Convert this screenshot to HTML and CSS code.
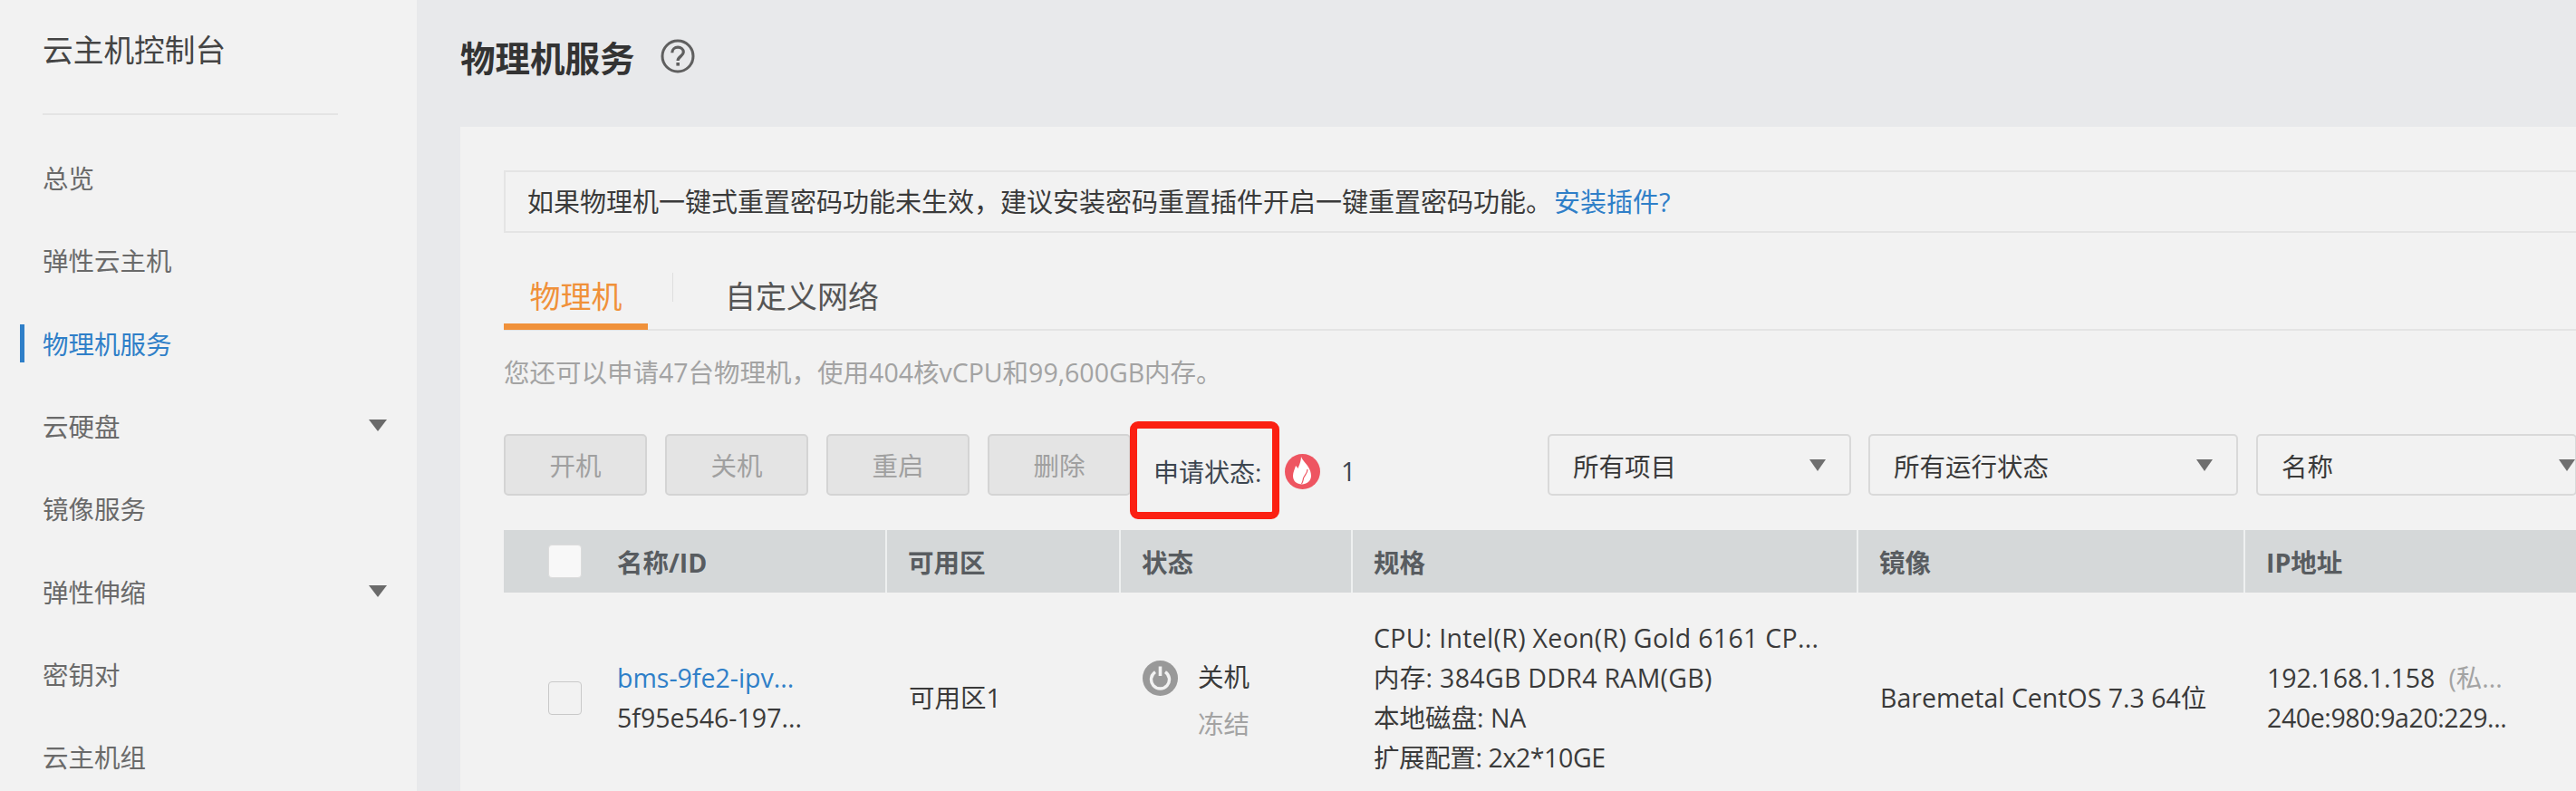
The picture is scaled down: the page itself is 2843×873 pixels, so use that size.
FILE: index.html
```html
<!DOCTYPE html>
<html lang="zh-CN">
<head>
  <meta charset="UTF-8" />
  <title>物理机服务</title>
  <link rel="stylesheet" href="styles.css">
</head>
<body>
  <div class="console">
    <!-- Left navigation -->
    <aside class="sidebar">
      <div class="sidebar-title">云主机控制台</div>
      <ul class="nav">
        <li class="nav-item">总览</li>
        <li class="nav-item">弹性云主机</li>
        <li class="nav-item active">物理机服务</li>
        <li class="nav-item has-sub">云硬盘<span class="arrow"></span></li>
        <li class="nav-item">镜像服务</li>
        <li class="nav-item has-sub">弹性伸缩<span class="arrow"></span></li>
        <li class="nav-item">密钥对</li>
        <li class="nav-item">云主机组</li>
      </ul>
    </aside>

    <main class="main">
      <header class="page-header">
        <h1>物理机服务</h1>
        <svg class="help-icon" viewBox="0 0 38 38">
          <circle cx="19" cy="19" r="17" fill="none" stroke="#5f5f5f" stroke-width="3"/>
          <path d="M12.800 15.200c0-3.700 2.800-6 6.300-6s6.200 2.200 6.200 5.300c0 4.600-6.200 4.700-6.200 9.600" fill="none" stroke="#5f5f5f" stroke-width="3.200"/>
          <rect x="17.400" y="26" width="3.600" height="3.600" fill="#5f5f5f"/>
        </svg>
      </header>

      <section class="panel">
        <div class="notice">如果物理机一键式重置密码功能未生效，建议安装密码重置插件开启一键重置密码功能。<a class="link notice-link">安装插件?</a></div>

        <div class="tabs">
          <div class="tab active">物理机</div>
          <div class="tab-sep"></div>
          <div class="tab">自定义网络</div>
        </div>

        <p class="quota">您还可以申请47台物理机，使用404核vCPU和99,600GB内存。</p>

        <div class="toolbar">
          <button class="btn">开机</button>
          <button class="btn">关机</button>
          <button class="btn">重启</button>
          <button class="btn">删除</button>
          <div class="apply-status">
            <span class="apply-label">申请状态:</span>
            <span class="red-box"></span>
            <svg class="flame-icon" viewBox="0 0 39 39">
              <circle cx="19.500" cy="19.500" r="19.500" fill="#ee5561"/>
              <path d="M18 3c2 6 11 11 11 21 0 6-5 9.500-10 9.500-6 0-10-3.500-10-9.500 0-4 2-7 3-11 1 1 2 2 2.500 3C16 12 18 8 18 3z" fill="#fff"/>
              <path d="M25 17c0 5-4 7-4.500 10-.5 2-.5 4-2 6" fill="none" stroke="#ee5561" stroke-width="1.200"/>
            </svg>
            <span class="apply-count">1</span>
          </div>
          <div class="select select-project">所有项目<span class="arrow"></span></div>
          <div class="select select-state">所有运行状态<span class="arrow"></span></div>
          <div class="select select-name">名称<span class="arrow"></span></div>
        </div>

        <div class="table">
          <div class="table-head">
            <div class="cell name-cell"><span class="checkbox"></span>名称/ID</div>
            <div class="cell">可用区</div>
            <div class="cell">状态</div>
            <div class="cell">规格</div>
            <div class="cell">镜像</div>
            <div class="cell">IP地址</div>
          </div>
          <div class="table-row">
            <div class="cell name-cell">
              <span class="checkbox"></span>
              <div>
                <div><a class="link">bms-9fe2-ipv...</a></div>
                <div>5f95e546-197...</div>
              </div>
            </div>
            <div class="cell">可用区1</div>
            <div class="cell state-cell">
              <svg class="power-icon" viewBox="0 0 39 39">
                <circle cx="19.500" cy="19.500" r="19.500" fill="#999"/>
                <path d="M14 12.600a10 10 0 1 0 11 0" fill="none" stroke="#f2f2f2" stroke-width="3.400"/>
                <path d="M19.500 6.500V17" fill="none" stroke="#f2f2f2" stroke-width="3.600"/>
              </svg>
              <div class="state-text">
                <div>关机</div>
                <div class="muted">冻结</div>
              </div>
            </div>
            <div class="cell spec-cell">
              <div class="spec-wide">CPU: Intel(R) Xeon(R) Gold 6161 CP...</div>
              <div class="spec-wide">内存: 384GB DDR4 RAM(GB)</div>
              <div>本地磁盘: NA</div>
              <div class="spec-tight">扩展配置: 2x2*10GE</div>
            </div>
            <div class="cell">Baremetal CentOS 7.3 64位</div>
            <div class="cell">
              <div>
                <div>192.168.1.158<span class="muted ip-note">(私...</span></div>
                <div class="ip-v6">240e:980:9a20:229...</div>
              </div>
            </div>
          </div>
        </div>
      </section>
    </main>
  </div>
</body>
</html>
```

FILE: styles.css
```css
/* GLOBAL */
:root {
  --panel-bg: #f2f2f2;
  --main-bg: #e8e9eb;
  --text-color: #3a3a3a;
  --muted: #a3a3a3;
  --blue: #2f7fc8;
  --orange: #f0913a;
  --line: #e4e4e4;
}

* {
  box-sizing: border-box;
}

html, body {
  margin: 0;
  padding: 0;
  height: 873px;
  overflow: hidden;
  background: var(--main-bg);
  font-family: "Open Sans", "Noto Sans CJK SC", sans-serif;
  font-size: 28.5px;
  color: var(--text-color);
}

.console {
  display: flex;
  height: 873px;
}

.arrow {
  width: 0;
  height: 0;
  border-left: 9px solid transparent;
  border-right: 9px solid transparent;
  border-top: 13px solid #6f6f6f;
}

.link {
  color: var(--blue);
}

.muted {
  color: var(--muted);
}

/* SIDEBAR */
.sidebar {
  flex: 0 0 460px;
  background: var(--panel-bg);
  padding: 0 33px 0 0;
}
.sidebar-title {
  margin: 0 54px 0 47px;
  height: 127px;
  padding-top: 31px;
  border-bottom: 2px solid var(--line);
  font-size: 33.7px;
  line-height: 48px;
  color: #444;
}
.nav {
  list-style: none;
  margin: 23px 0 0;
  padding: 0;
}
.nav-item {
  display: flex;
  align-items: center;
  justify-content: space-between;
  height: 91.3px;
  padding-left: 47px;
  color: #6a6a6a;
  position: relative;
}
.nav-item .arrow {
  border-left-width: 10px;
  border-right-width: 10px;
  border-top-color: #6a6a6a;
}
.nav-item.active {
  color: var(--blue);
}
.nav-item.active::before {
  content: "";
  position: absolute;
  left: 22px;
  top: 25px;
  width: 5px;
  height: 42px;
  background: var(--blue);
}

/* MAIN */
.main {
  flex: 1;
  min-width: 0;
  overflow: hidden;
}
.page-header {
  display: flex;
  align-items: center;
  gap: 28px;
  height: 123px;
  margin: 0 0 17px 48px;
}
.page-header h1 {
  margin: 0;
  font-size: 38.5px;
  font-weight: 700;
  color: #333;
}
.help-icon {
  width: 38px;
  height: 38px;
}
.panel {
  margin-left: 48px;
  padding: 48px 0 0 48px;
  width: 2335px;
  height: 733px;
  background: var(--panel-bg);
  overflow: hidden;
}

.notice {
  height: 69px;
  padding-left: 24px;
  border: 2px solid var(--line);
  border-right: 0;
  font-size: 29px;
  line-height: 66px;
  white-space: nowrap;
}
.notice-link {
  margin-left: 2px;
}

/* TABS */
.tabs {
  display: flex;
  align-items: center;
  height: 108px;
  padding-top: 33px;
  border-bottom: 2px solid var(--line);
}
.tab {
  font-size: 34px;
  line-height: 74px;
  height: 74px;
  color: #555;
}
.tab.active {
  width: 159px;
  text-align: center;
  color: var(--orange);
  border-bottom: 7px solid var(--orange);
}
.tab-sep {
  width: 1px;
  height: 32px;
  margin: 0 57px 0 27px;
  background: #dedede;
  position: relative;
  top: -10px;
}

.quota {
  margin: 0;
  height: 114px;
  padding-top: 24px;
  line-height: 44px;
  color: var(--muted);
}

/* TOOLBAR */
.toolbar {
  display: flex;
  align-items: flex-start;
  height: 106px;
}
.btn {
  flex: none;
  width: 158px;
  height: 68px;
  margin-right: 20px;
  padding: 0 0 2px;
  background: #e4e4e4;
  border: 2px solid #d4d4d4;
  border-radius: 5px;
  font: inherit;
  color: #a0a0a0;
}
.btn:nth-of-type(4) {
  margin-right: 0;
}
.apply-status {
  flex: none;
  display: flex;
  align-items: center;
  position: relative;
  width: 460px;
  height: 82px;
  padding-left: 25px;
}
.apply-label {
  width: 145px;
  font-size: 28px;
  color: #3d4650;
  white-space: nowrap;
}
.red-box {
  position: absolute;
  left: -1px;
  top: -14px;
  width: 165px;
  height: 108px;
  border: 8px solid #fb2012;
  border-radius: 9px;
}
.flame-icon {
  flex: none;
  width: 39px;
  height: 39px;
}
.apply-count {
  margin-left: 23px;
  color: #3d4650;
}
.select {
  flex: none;
  display: flex;
  align-items: center;
  justify-content: space-between;
  height: 68px;
  margin-right: 20px;
  padding: 0 26px 0 26px;
  border: 2px solid #d9d9d9;
  border-radius: 5px;
  background: var(--panel-bg);
}
.select-project { width: 335px; margin-right: 19px; }
.select-state { width: 408px; }
.select-name { width: 354px; margin-right: 0; padding-right: 0; }

/* TABLE */
.table-head,
.table-row {
  display: grid;
  grid-template-columns: 421px 258px 256px 558px 427px 1fr;
}
.table-head {
  height: 69px;
  background: #d5d8d9;
  font-weight: 700;
  color: #585c60;
}
.table-row {
  height: 232px;
  line-height: 44px;
}
.cell {
  display: flex;
  align-items: center;
  padding-left: 26px;
  white-space: nowrap;
}
.table-head .cell + .cell {
  border-left: 2px solid #eef0f0;
  padding-left: 23px;
}
.name-cell {
  padding-left: 49px;
}
.checkbox {
  flex: none;
  width: 37px;
  height: 37px;
  margin-right: 39px;
  background: #f8f8f8;
  border: 1px solid #dcdcdc;
  border-radius: 4px;
}
.table-row .checkbox {
  background: var(--panel-bg);
  border-color: #c9c9c9;
}
.state-cell {
  gap: 22px;
}
.power-icon {
  flex: none;
  width: 39px;
  height: 39px;
  margin-bottom: 44px;
}
.state-text {
  line-height: 52px;
  padding-top: 6px;
}
.spec-cell {
  flex-direction: column;
  align-items: flex-start;
  justify-content: center;
  padding-left: 25px;
}
.spec-wide {
  letter-spacing: 0.3px;
}
.spec-tight {
  letter-spacing: -0.4px;
}
.ip-note {
  margin-left: 15px;
}
.ip-v6 {
  letter-spacing: -0.4px;
}
```
